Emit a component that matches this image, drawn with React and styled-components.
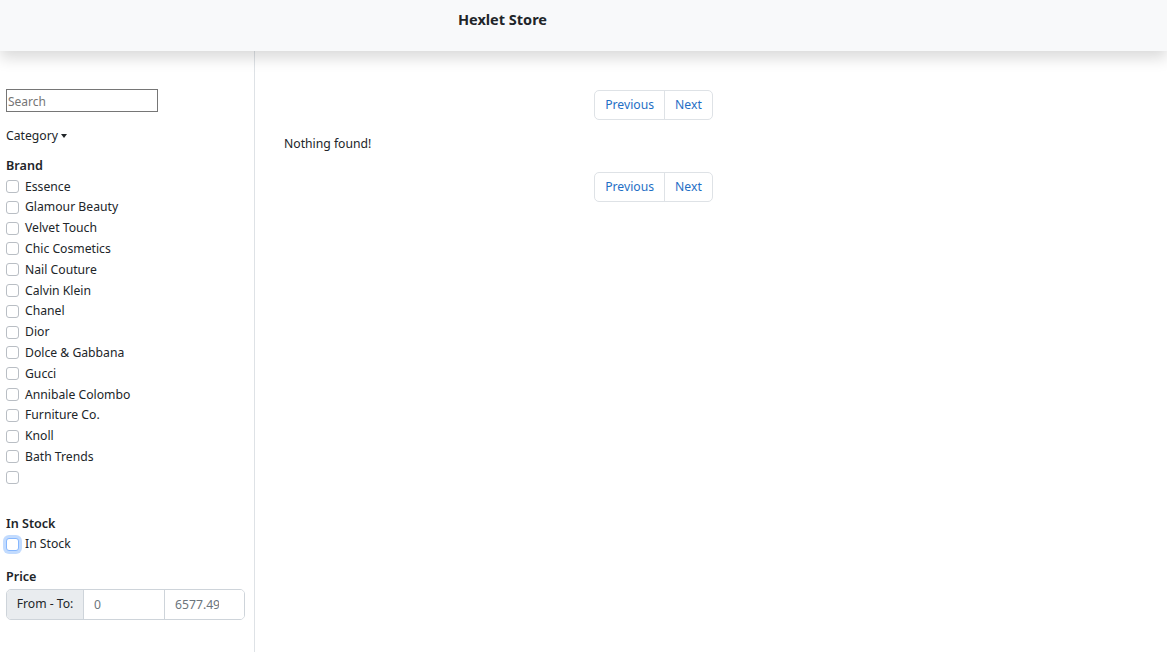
import styled, { createGlobalStyle } from 'styled-components';

const GlobalStyle = createGlobalStyle`
  html, body {
    margin: 0;
    padding: 0;
    background: #fff;
  }
  body {
    font-family: 'Noto Sans', 'Open Sans', Arial, sans-serif;
    font-size: 12.2px;
    line-height: 20.8px;
    color: #212529;
  }
  * {
    box-sizing: border-box;
  }
`;

const Page = styled.div`
  display: flex;
  flex-direction: column;
  min-height: 652px;
`;

const Navbar = styled.header`
  position: relative;
  z-index: 1;
  height: 51px;
  background: #f8f9fa;
  box-shadow: 0 7px 14px rgba(0, 0, 0, 0.15);
  display: flex;
  justify-content: center;
  padding: 8px 162px 0 0;
`;

const Brand = styled.div`
  font-size: 14.5px;
  font-weight: 700;
  line-height: 22px;
  color: #212529;
`;

const Body = styled.div`
  flex: 1;
  display: flex;
`;

const Sidebar = styled.aside`
  width: 255px;
  flex-shrink: 0;
  border-right: 1px solid #dee2e6;
  padding: 38px 9px 20px 6px;
  min-height: 601px;
`;

const SearchInput = styled.input`
  width: 152px;
  height: 23px;
  border: 1px solid #767676;
  border-radius: 0;
  padding: 2px 1px 0;
  font-family: inherit;
  font-size: 12px;
  color: #212529;
  display: block;

  &::placeholder {
    color: #757575;
  }
`;

const Dropdown = styled.div`
  margin-top: 14px;
  display: flex;
  align-items: center;
  gap: 3px;
  cursor: pointer;
`;

const Caret = styled.span`
  width: 0;
  height: 0;
  border-left: 3px solid transparent;
  border-right: 3px solid transparent;
  border-top: 4px solid #212529;
  margin-top: -1px;
`;

const Section = styled.div`
  margin-top: ${(p) => p.$gap}px;
`;

const SectionTitle = styled.div`
  font-weight: 600;
  font-size: 12.6px;
`;

const CheckRow = styled.label`
  display: flex;
  align-items: center;
  gap: 6px;
  height: 20.8px;
`;

const Box = styled.span`
  width: 13px;
  height: 13px;
  flex-shrink: 0;
  border: 1px solid ${(p) => (p.$focus ? '#86b7fe' : '#b9bec4')};
  border-radius: 3px;
  background: #fff;
  margin-top: -1px;
  box-shadow: ${(p) => (p.$focus ? '0 0 0 3px rgba(13, 110, 253, 0.25)' : 'none')};
`;

const InputGroup = styled.div`
  display: flex;
  margin-top: 1px;
  width: 239px;
  height: 31px;
  border: 1px solid #ced4da;
  border-radius: 5px;
  overflow: hidden;
`;

const Addon = styled.div`
  width: 77px;
  flex-shrink: 0;
  background: #e9ecef;
  border-right: 1px solid #ced4da;
  display: flex;
  align-items: center;
  justify-content: center;
`;

const PriceInput = styled.input`
  width: ${(p) => (p.$width ? `${p.$width}px` : 'auto')};
  flex: ${(p) => (p.$width ? '0 0 auto' : '1 1 0')};
  min-width: 0;
  height: 100%;
  border: none;
  outline: none;
  padding: 0 ${(p) => p.$right}px 0 10px;
  font-family: inherit;
  font-size: 12.2px;
  color: #6c757d;
  background: #fff;

  & + & {
    border-left: 1px solid #ced4da;
  }
`;

const Main = styled.main`
  flex: 1;
  padding: 39px 0 0 29px;
`;

const Content = styled.div`
  width: 739px;
`;

const Pager = styled.nav`
  display: flex;
  justify-content: center;
`;

const PagerList = styled.div`
  display: flex;
  border: 1px solid #dee2e6;
  border-radius: 5px;
  overflow: hidden;
`;

const PageLink = styled.a`
  height: 28px;
  display: flex;
  align-items: center;
  padding: 1px 10px 0;
  color: #1f6fc5;
  text-decoration: none;
  cursor: pointer;

  & + & {
    border-left: 1px solid #dee2e6;
  }
`;

const Empty = styled.p`
  margin: 14px 0 17px;
`;

const brands = [
  'Essence',
  'Glamour Beauty',
  'Velvet Touch',
  'Chic Cosmetics',
  'Nail Couture',
  'Calvin Klein',
  'Chanel',
  'Dior',
  'Dolce & Gabbana',
  'Gucci',
  'Annibale Colombo',
  'Furniture Co.',
  'Knoll',
  'Bath Trends',
  '',
];

const Pagination = () => (
  <Pager>
    <PagerList>
      <PageLink>Previous</PageLink>
      <PageLink>Next</PageLink>
    </PagerList>
  </Pager>
);

const App = () => (
  <>
    <GlobalStyle />
    <Page>
      <Navbar>
        <Brand>Hexlet Store</Brand>
      </Navbar>
      <Body>
        <Sidebar>
          <SearchInput placeholder="Search" />
          <Dropdown>
            Category <Caret />
          </Dropdown>
          <Section $gap={9}>
            <SectionTitle>Brand</SectionTitle>
            {brands.map((brand, i) => (
              <CheckRow key={i}>
                <Box />
                {brand}
              </CheckRow>
            ))}
          </Section>
          <Section $gap={25}>
            <SectionTitle>In Stock</SectionTitle>
            <CheckRow>
              <Box $focus />
              In Stock
            </CheckRow>
          </Section>
          <Section $gap={12}>
            <SectionTitle>Price</SectionTitle>
            <InputGroup>
              <Addon>From - To:</Addon>
              <PriceInput $width={80} $right={10} defaultValue="0" readOnly />
              <PriceInput $right={25} defaultValue="6577.499" readOnly />
            </InputGroup>
          </Section>
        </Sidebar>
        <Main>
          <Content>
            <Pagination />
            <Empty>Nothing found!</Empty>
            <Pagination />
          </Content>
        </Main>
      </Body>
    </Page>
  </>
);

export default App;
